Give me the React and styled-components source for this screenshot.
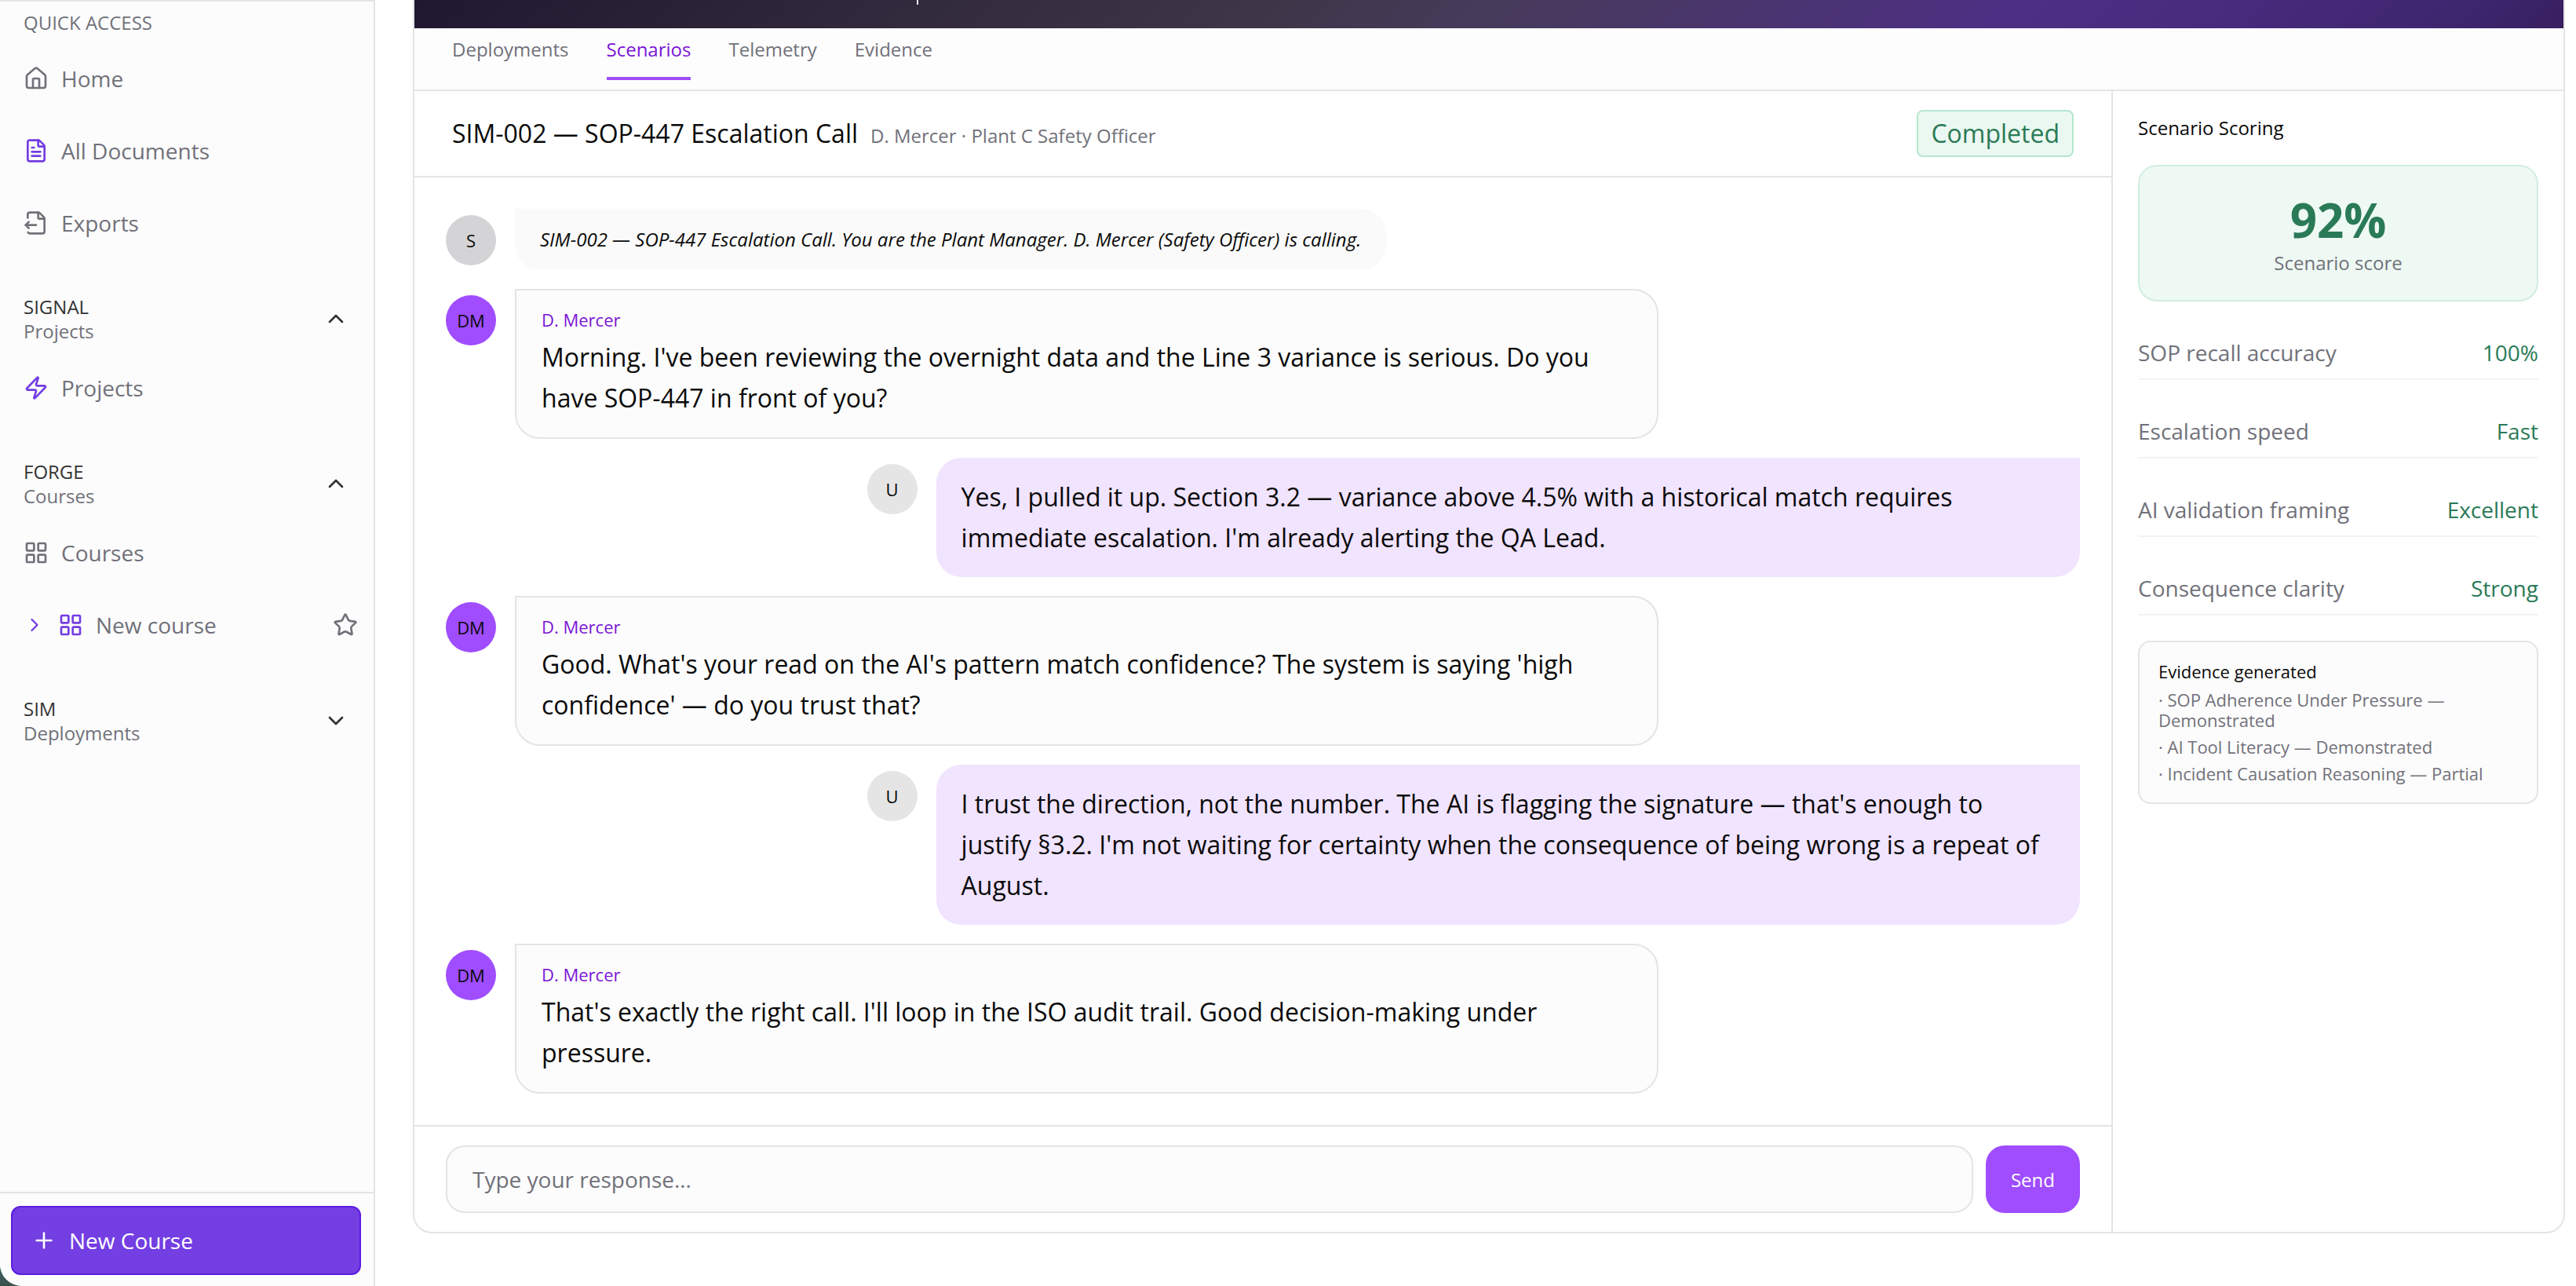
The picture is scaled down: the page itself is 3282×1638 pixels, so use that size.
import React from "react";
import styled, { createGlobalStyle, css } from "styled-components";
import {
  House,
  FileText,
  FileOutput,
  Zap,
  LayoutGrid,
  ChevronUp,
  ChevronDown,
  ChevronRight,
  Star,
  Plus,
} from "lucide-react";

const color = {
  text: "#0a0a0a",
  heading: "#333333",
  muted: "#71717a",
  line: "#e4e4e4",
  faintLine: "#f3f3f3",
  surface: "#fcfcfc",
  violet: "#733ee2",
  violetDark: "#5b1ee0",
  purple: "#9f4dff",
  purpleText: "#7a14d6",
  lilac: "#f1e4ff",
  green: "#2a7a57",
  greenWash: "#eef9f3",
};

const GlobalStyle = createGlobalStyle`
  *, *::before, *::after { box-sizing: border-box; }
  body {
    margin: 0;
    background: linear-gradient(#2c4a5c, #41697a 98%, #3a5148 100%);
    background-attachment: fixed;
    color: ${color.text};
    font-family: "Open Sans", "Noto Sans", sans-serif;
    font-size: 28px;
  }
  h1, h2, h3, p, ul, dl, dd, dt { margin: 0; padding: 0; font-weight: 400; }
  ul { list-style: none; }
  button, input { font: inherit; margin: 0; }
  button { cursor: pointer; }
`;

const Shell = styled.div`
  display: flex;
  min-height: 100vh;
  overflow: hidden;
  background: #ffffff;
  border-bottom-left-radius: 28px;
`;

/* ---------- Sidebar ---------- */

const Sidebar = styled.aside`
  flex: none;
  width: 478px;
  display: flex;
  flex-direction: column;
  background: ${color.surface};
  border-top: 2px solid ${color.line};
  border-right: 2px solid ${color.line};
`;

const SidebarBody = styled.nav`
  flex: 1;
  padding: 12px 0;
`;

const SectionLabel = styled.h2`
  padding: 0 30px;
  margin-bottom: 14px;
  font-size: 24px;
  line-height: 30px;
  color: ${color.muted};
`;

const NavList = styled.ul`
  display: flex;
  flex-direction: column;
  gap: 8px;
`;

const NavItem = styled.li`
  display: flex;
  align-items: center;
  gap: 16px;
  height: 84px;
  padding: 0 20px 0 30px;
`;

const NavLink = styled.a`
  flex: 1;
  display: flex;
  align-items: center;
  gap: 16px;
  color: ${color.muted};
  text-decoration: none;
  line-height: 36px;

  svg {
    color: ${(p) => (p.$accent ? color.violet : color.muted)};
  }
`;

const IconButton = styled.button`
  display: flex;
  padding: 0;
  border: 0;
  background: none;
  color: ${(p) => (p.$accent ? color.violet : color.muted)};
`;

const GroupToggle = styled.button`
  display: flex;
  align-items: center;
  justify-content: space-between;
  width: 100%;
  height: 76px;
  margin: 42px 0 8px;
  padding: 0 32px 0 30px;
  border: 0;
  background: none;
  color: ${color.heading};
  text-align: left;
  font-size: 24px;
  line-height: 31px;
`;

const GroupName = styled.span`
  display: block;
`;

const GroupHint = styled.span`
  display: block;
  color: ${color.muted};
`;

const SidebarFooter = styled.div`
  padding: 16px 16px 14px 14px;
  border-top: 2px solid ${color.line};
`;

const NewCourseButton = styled.button`
  display: flex;
  align-items: center;
  gap: 16px;
  width: 100%;
  height: 88px;
  padding: 0 24px;
  border: 2px solid ${color.violetDark};
  border-radius: 12px;
  background: ${color.violet};
  color: #ffffff;
`;

/* ---------- Main card ---------- */

const Main = styled.main`
  flex: 1;
  min-width: 0;
  padding: 0 14px 48px 48px;
`;

const Card = styled.section`
  overflow: hidden;
  border: 2px solid ${color.line};
  border-top: 0;
  border-radius: 0 0 24px 24px;
`;

const Banner = styled.div`
  height: 36px;
  padding-left: 640px;
  background: linear-gradient(
    135deg,
    #20182f 0%,
    #322a3d 24%,
    #3e3547 39%,
    #473b5b 50%,
    #4a366b 60%,
    #4d3085 74%,
    #462a7a 86%,
    #3e266e 95%,
    #371f60 100%
  );
`;

const BannerMark = styled.span`
  display: block;
  width: 2px;
  height: 6px;
  background: #ece9f0;
`;

const Tabs = styled.nav`
  display: flex;
  gap: 48px;
  padding: 10px 48px 12px;
  background: #fdfdfd;
  border-bottom: 2px solid ${color.line};
`;

const Tab = styled.button`
  padding: 0 0 18px;
  border: 0;
  border-bottom: 4px solid ${(p) => (p.$active ? color.purple : "transparent")};
  background: none;
  color: ${(p) => (p.$active ? color.purpleText : color.muted)};
  font-size: 24px;
  line-height: 34px;
`;

const Columns = styled.div`
  display: flex;
`;

const Conversation = styled.div`
  flex: 1;
  min-width: 0;
`;

const ConversationHeader = styled.header`
  display: flex;
  align-items: center;
  justify-content: space-between;
  padding: 24px 48px;
  border-bottom: 2px solid ${color.line};
`;

const TitleGroup = styled.div`
  display: flex;
  align-items: baseline;
  gap: 16px;
`;

const Title = styled.h1`
  font-size: 32px;
  line-height: 44px;
`;

const Subtitle = styled.p`
  font-size: 24px;
  color: ${color.muted};
`;

const StatusBadge = styled.span`
  padding: 6px 16px;
  border: 2px solid #b6e6cf;
  border-radius: 8px;
  background: #ebf8f1;
  color: ${color.green};
  font-size: 32px;
  line-height: 44px;
`;

const Messages = styled.div`
  display: flex;
  flex-direction: column;
  gap: 24px;
  padding: 40px;
`;

const MessageRow = styled.article`
  display: flex;
  align-items: flex-start;
  justify-content: ${(p) => (p.$kind === "user" ? "flex-end" : "flex-start")};
  gap: 24px;
`;

const avatarFill = { system: "#d4d4d6", agent: color.purple, user: "#e5e5e5" };

const Avatar = styled.span`
  flex: none;
  display: flex;
  align-items: center;
  justify-content: center;
  width: 64px;
  height: 64px;
  margin-top: 8px;
  border-radius: 50%;
  background: ${(p) => avatarFill[p.$kind]};
  font-size: 22px;
`;

const bubbleKinds = {
  system: css`
    border-radius: 0 32px 32px 32px;
    background: #fafafa;
    font-size: 24px;
    font-style: italic;
    line-height: 30px;
  `,
  agent: css`
    border: 2px solid ${color.line};
    border-radius: 0 32px 32px 32px;
    background: ${color.surface};
  `,
  user: css`
    border-radius: 32px 0 32px 32px;
    background: ${color.lilac};
  `,
};

const Bubble = styled.div`
  max-width: 70%;
  padding: 24px 32px;
  font-size: 32px;
  line-height: 52px;
  ${(p) => bubbleKinds[p.$kind]}
`;

const Speaker = styled.h3`
  margin-bottom: 8px;
  color: ${color.purpleText};
  font-size: 22px;
  line-height: 27px;
`;

const Composer = styled.form`
  display: flex;
  gap: 16px;
  padding: 24px 40px;
  border-top: 2px solid ${color.line};
`;

const ResponseInput = styled.input`
  flex: 1;
  min-width: 0;
  height: 86px;
  padding: 0 32px;
  border: 2px solid ${color.line};
  border-radius: 24px;
  background: ${color.surface};
  color: ${color.text};
  outline: none;

  &::placeholder {
    color: ${color.muted};
    opacity: 1;
  }
`;

const SendButton = styled.button`
  padding: 0 32px;
  border: 0;
  border-radius: 24px;
  background: ${color.purple};
  color: #ffffff;
  font-size: 24px;
`;

/* ---------- Scoring panel ---------- */

const ScorePanel = styled.aside`
  flex: none;
  width: 576px;
  display: flex;
  flex-direction: column;
  gap: 32px;
  padding: 32px;
  border-left: 2px solid ${color.line};
`;

const PanelTitle = styled.h2`
  font-size: 24px;
  line-height: 30px;
`;

const ScoreCard = styled.div`
  padding: 32px;
  border: 2px solid #d0eede;
  border-radius: 24px;
  background: ${color.greenWash};
  text-align: center;
`;

const ScoreValue = styled.p`
  margin-bottom: 4px;
  color: ${color.green};
  font-size: 60px;
  font-weight: 700;
  line-height: 72px;
`;

const ScoreLabel = styled.p`
  color: ${color.muted};
  font-size: 24px;
  line-height: 30px;
`;

const Metrics = styled.dl`
  display: flex;
  flex-direction: column;
  gap: 32px;
`;

const Metric = styled.div`
  display: flex;
  justify-content: space-between;
  padding: 16px 0;
  border-bottom: 2px solid ${color.faintLine};
  line-height: 34px;
`;

const MetricName = styled.dt`
  color: ${color.muted};
`;

const MetricValue = styled.dd`
  color: ${color.green};
`;

const EvidenceCard = styled.div`
  padding: 24px;
  border: 2px solid ${color.line};
  border-radius: 16px;
  background: ${color.surface};
  font-size: 22px;
  line-height: 26px;
`;

const EvidenceTitle = styled.h3`
  margin-bottom: 10px;
  font-size: 22px;
`;

const EvidenceList = styled.ul`
  display: flex;
  flex-direction: column;
  gap: 8px;
  color: ${color.muted};
`;

/* ---------- Data ---------- */

const groups = [
  { name: "SIGNAL", hint: "Projects", open: true, items: [{ label: "Projects", icon: Zap, accent: true }] },
  {
    name: "FORGE",
    hint: "Courses",
    open: true,
    items: [
      { label: "Courses", icon: LayoutGrid },
      { label: "New course", icon: LayoutGrid, accent: true, expandable: true },
    ],
  },
  { name: "SIM", hint: "Deployments", open: false, items: [] },
];

const quickAccess = [
  { label: "Home", icon: House },
  { label: "All Documents", icon: FileText, accent: true },
  { label: "Exports", icon: FileOutput },
];

const tabs = ["Deployments", "Scenarios", "Telemetry", "Evidence"];

const messages = [
  {
    kind: "system",
    initials: "S",
    text: "SIM-002 — SOP-447 Escalation Call. You are the Plant Manager. D. Mercer (Safety Officer) is calling.",
  },
  {
    kind: "agent",
    initials: "DM",
    speaker: "D. Mercer",
    text: "Morning. I've been reviewing the overnight data and the Line 3 variance is serious. Do you have SOP-447 in front of you?",
  },
  {
    kind: "user",
    initials: "U",
    text: "Yes, I pulled it up. Section 3.2 — variance above 4.5% with a historical match requires immediate escalation. I'm already alerting the QA Lead.",
  },
  {
    kind: "agent",
    initials: "DM",
    speaker: "D. Mercer",
    text: "Good. What's your read on the AI's pattern match confidence? The system is saying 'high confidence' — do you trust that?",
  },
  {
    kind: "user",
    initials: "U",
    text: "I trust the direction, not the number. The AI is flagging the signature — that's enough to justify §3.2. I'm not waiting for certainty when the consequence of being wrong is a repeat of August.",
  },
  {
    kind: "agent",
    initials: "DM",
    speaker: "D. Mercer",
    text: "That's exactly the right call. I'll loop in the ISO audit trail. Good decision-making under pressure.",
  },
];

const metrics = [
  ["SOP recall accuracy", "100%"],
  ["Escalation speed", "Fast"],
  ["AI validation framing", "Excellent"],
  ["Consequence clarity", "Strong"],
];

const evidence = [
  "· SOP Adherence Under Pressure — Demonstrated",
  "· AI Tool Literacy — Demonstrated",
  "· Incident Causation Reasoning — Partial",
];

/* ---------- Views ---------- */

function NavEntry({ item }) {
  const Icon = item.icon;
  return (
    <NavItem>
      {item.expandable && (
        <IconButton type="button" $accent aria-label={`Expand ${item.label}`}>
          <ChevronRight size={28} strokeWidth={2} />
        </IconButton>
      )}
      <NavLink href="#" $accent={item.accent}>
        <Icon size={32} strokeWidth={2} />
        {item.label}
      </NavLink>
      {item.expandable && (
        <IconButton type="button" aria-label={`Star ${item.label}`}>
          <Star size={32} strokeWidth={2} />
        </IconButton>
      )}
    </NavItem>
  );
}

function Navigation() {
  return (
    <Sidebar>
      <SidebarBody>
        <SectionLabel>QUICK ACCESS</SectionLabel>
        <NavList>
          {quickAccess.map((item) => (
            <NavEntry key={item.label} item={item} />
          ))}
        </NavList>
        {groups.map((group) => (
          <React.Fragment key={group.name}>
            <GroupToggle type="button" aria-expanded={group.open}>
              <span>
                <GroupName>{group.name}</GroupName>
                <GroupHint>{group.hint}</GroupHint>
              </span>
              {group.open ? <ChevronUp size={32} /> : <ChevronDown size={32} />}
            </GroupToggle>
            <NavList>
              {group.items.map((item) => (
                <NavEntry key={item.label} item={item} />
              ))}
            </NavList>
          </React.Fragment>
        ))}
      </SidebarBody>
      <SidebarFooter>
        <NewCourseButton type="button">
          <Plus size={32} strokeWidth={2} />
          New Course
        </NewCourseButton>
      </SidebarFooter>
    </Sidebar>
  );
}

function Message({ message }) {
  return (
    <MessageRow $kind={message.kind}>
      <Avatar $kind={message.kind}>{message.initials}</Avatar>
      <Bubble $kind={message.kind}>
        {message.speaker && <Speaker>{message.speaker}</Speaker>}
        <p>{message.text}</p>
      </Bubble>
    </MessageRow>
  );
}

function Scoring() {
  return (
    <ScorePanel>
      <PanelTitle>Scenario Scoring</PanelTitle>
      <ScoreCard>
        <ScoreValue>92%</ScoreValue>
        <ScoreLabel>Scenario score</ScoreLabel>
      </ScoreCard>
      <Metrics>
        {metrics.map(([name, value]) => (
          <Metric key={name}>
            <MetricName>{name}</MetricName>
            <MetricValue>{value}</MetricValue>
          </Metric>
        ))}
      </Metrics>
      <EvidenceCard>
        <EvidenceTitle>Evidence generated</EvidenceTitle>
        <EvidenceList>
          {evidence.map((line) => (
            <li key={line}>{line}</li>
          ))}
        </EvidenceList>
      </EvidenceCard>
    </ScorePanel>
  );
}

export default function App() {
  return (
    <>
      <GlobalStyle />
      <Shell>
        <Navigation />
        <Main>
          <Card>
            <Banner>
              <BannerMark />
            </Banner>
            <Tabs>
              {tabs.map((tab) => (
                <Tab key={tab} type="button" $active={tab === "Scenarios"}>
                  {tab}
                </Tab>
              ))}
            </Tabs>
            <Columns>
              <Conversation>
                <ConversationHeader>
                  <TitleGroup>
                    <Title>SIM-002 — SOP-447 Escalation Call</Title>
                    <Subtitle>D. Mercer · Plant C Safety Officer</Subtitle>
                  </TitleGroup>
                  <StatusBadge>Completed</StatusBadge>
                </ConversationHeader>
                <Messages>
                  {messages.map((message, index) => (
                    <Message key={index} message={message} />
                  ))}
                </Messages>
                <Composer onSubmit={(event) => event.preventDefault()}>
                  <ResponseInput
                    type="text"
                    aria-label="Your response"
                    placeholder="Type your response…"
                  />
                  <SendButton type="submit">Send</SendButton>
                </Composer>
              </Conversation>
              <Scoring />
            </Columns>
          </Card>
        </Main>
      </Shell>
    </>
  );
}
